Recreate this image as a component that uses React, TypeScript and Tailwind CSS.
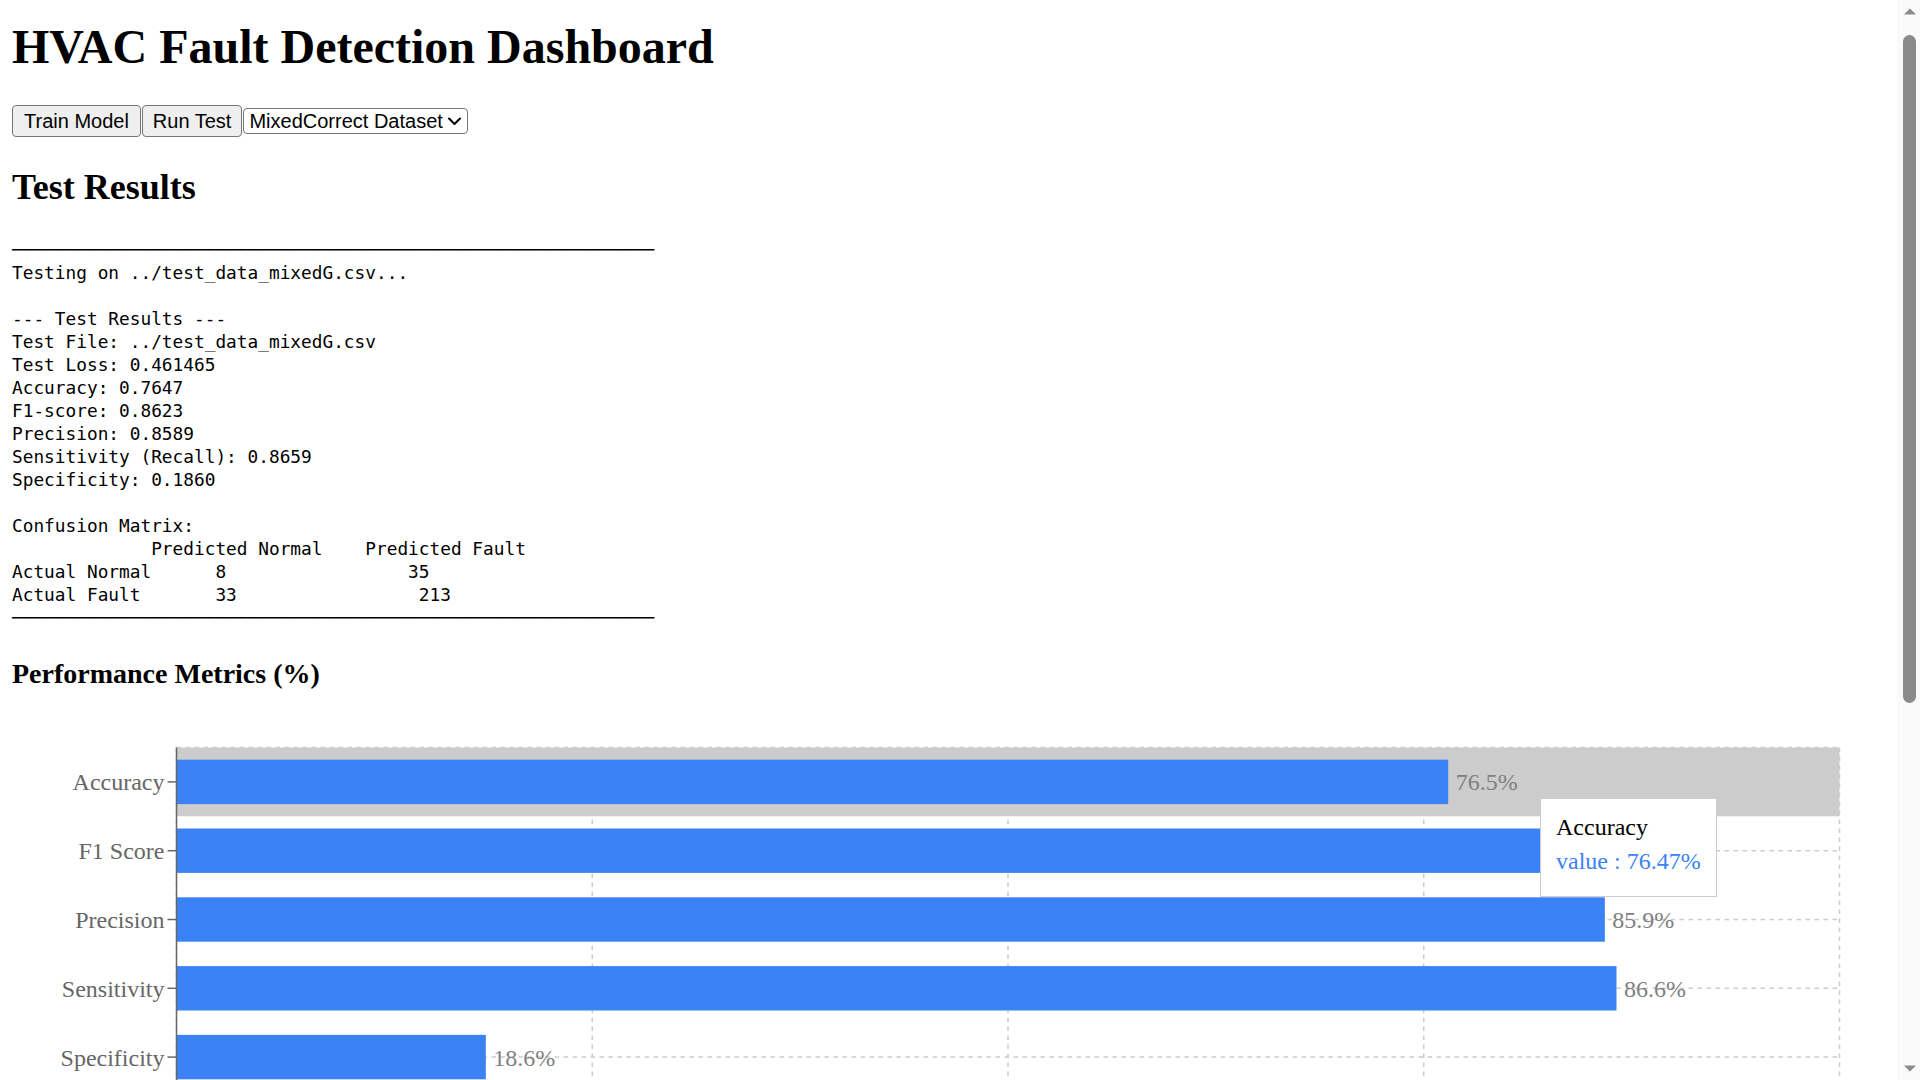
import React from "react";

const metrics = [
  { name: "Accuracy", value: 76.47 },
  { name: "F1 Score", value: 86.23 },
  { name: "Precision", value: 85.89 },
  { name: "Sensitivity", value: 86.59 },
  { name: "Specificity", value: 18.6 },
];

const RULE = "─".repeat(60);

const LOG = `${RULE}
Testing on ../test_data_mixedG.csv...

--- Test Results ---
Test File: ../test_data_mixedG.csv
Test Loss: 0.461465
Accuracy: 0.7647
F1-score: 0.8623
Precision: 0.8589
Sensitivity (Recall): 0.8659
Specificity: 0.1860

Confusion Matrix:
             Predicted Normal    Predicted Fault
Actual Normal      8                 35
Actual Fault       33                 213
${RULE}`;

// chart geometry (svg coords)
const PLOT_X = 164.5;
const PLOT_W = 1663;
const PLOT_Y = 47.5;
const BAND = 68.8;
const BAR_H = 44.4;
const PLOT_H = BAND * metrics.length;

function MetricsChart() {
  const ticks = [0, 25, 50, 75, 100];
  return (
    <div className="relative mt-[10.5px] h-[400px] w-[1873px]">
      <svg width={1873} height={400} className="block" style={{ fontFamily: '"Liberation Serif", serif' }}>
        {/* grid */}
        <g stroke="#ccc" strokeWidth={1.5} strokeDasharray="4.5 4.5" fill="none">
          <line x1={PLOT_X} x2={PLOT_X + PLOT_W} y1={PLOT_Y} y2={PLOT_Y} />
          {metrics.map((m, i) => (
            <line key={m.name} x1={PLOT_X} x2={PLOT_X + PLOT_W} y1={PLOT_Y + BAND * i + BAND / 2} y2={PLOT_Y + BAND * i + BAND / 2} />
          ))}
          {ticks.map((t) => (
            <line key={t} x1={PLOT_X + (PLOT_W * t) / 100} x2={PLOT_X + (PLOT_W * t) / 100} y1={PLOT_Y} y2={PLOT_Y + PLOT_H} />
          ))}
        </g>

        {/* hover cursor */}
        <rect x={PLOT_X} y={PLOT_Y} width={PLOT_W} height={BAND} fill="#ccc" />

        {/* bars */}
        {metrics.map((m, i) => {
          const w = (PLOT_W * m.value) / 100;
          const cy = PLOT_Y + BAND * i + BAND / 2;
          return (
            <g key={m.name}>
              <rect x={PLOT_X} y={PLOT_Y + BAND * i + (BAND - BAR_H) / 2} width={w} height={BAR_H} fill="#3b82f6" />
              <text x={PLOT_X + w + 7.5} y={cy} dy="0.355em" fontSize={24} fill="#808080">
                {m.value.toFixed(1)}%
              </text>
            </g>
          );
        })}

        {/* y axis */}
        <line x1={PLOT_X} x2={PLOT_X} y1={PLOT_Y} y2={PLOT_Y + PLOT_H} stroke="#666" strokeWidth={1.5} />
        {metrics.map((m, i) => {
          const cy = PLOT_Y + BAND * i + BAND / 2;
          return (
            <g key={m.name}>
              <line x1={PLOT_X - 9} x2={PLOT_X} y1={cy} y2={cy} stroke="#666" strokeWidth={1.5} />
              <text x={PLOT_X - 12} y={cy} dy="0.355em" textAnchor="end" fontSize={24} fill="#666">
                {m.name}
              </text>
            </g>
          );
        })}
      </svg>

      {/* tooltip */}
      <div className="absolute left-[1528px] top-[98px] whitespace-nowrap border border-[#ccc] bg-white p-[15px] font-['Liberation_Serif',serif] text-[24px] leading-[27.6px]">
        <p className="text-black">Accuracy</p>
        <p className="py-[6px] text-[#3b82f6]">value : 76.47%</p>
      </div>
    </div>
  );
}

// window scrollbar as it appears in the screenshot
function Scrollbar() {
  return (
    <div className="fixed right-0 top-0 flex h-screen w-[23px] flex-col items-center bg-[#fafafa] pt-[8px]">
      <svg width="14" height="7" viewBox="0 0 14 7" className="ml-[2px]">
        <path d="M1 6.5 L7 0.5 L13 6.5 Z" fill="#8a8a8a" />
      </svg>
      <div className="ml-[2px] mt-[20px] h-[668px] w-[13px] rounded-full bg-[#8a8a8a]" />
      <div className="flex-1" />
      <svg width="14" height="7" viewBox="0 0 14 7" className="mb-[8px] ml-[2px]">
        <path d="M1 0.5 L7 6.5 L13 0.5 Z" fill="#8a8a8a" />
      </svg>
    </div>
  );
}

export default function App() {
  return (
    <div className="min-h-screen bg-white px-[12px] pt-[19px] pb-[40px] text-black font-['Liberation_Serif',serif]">
      <h1 className="text-[48px] leading-[55px] font-bold">HVAC Fault Detection Dashboard</h1>

      <div className="mt-[31px] flex items-center gap-[1px] font-['Liberation_Sans',Arial,sans-serif] text-[20px]">
        <button className="h-[32px] rounded-[4px] border border-[#767676] bg-[#efefef] px-[11px] leading-none text-black">
          Train Model
        </button>
        <button className="h-[32px] rounded-[4px] border border-[#767676] bg-[#efefef] px-[10px] leading-none text-black">
          Run Test
        </button>
        <div className="flex h-[26px] w-[225px] items-center justify-between rounded-[4px] border border-[#767676] bg-white pl-[5px] pr-[5px] leading-none">
          <span>MixedCorrect Dataset</span>
          <svg width="15" height="10" viewBox="0 0 15 10" fill="none">
            <path d="M2 2.5 L7.5 8 L13 2.5" stroke="#000" strokeWidth="2" strokeLinecap="round" strokeLinejoin="round" />
          </svg>
        </div>
      </div>

      <h2 className="mt-[30px] text-[36px] leading-[41px] font-bold">Test Results</h2>

      <pre className="mt-[30px] font-['DejaVu_Sans_Mono',monospace] text-[17.8px] leading-[23px] whitespace-pre">{LOG}</pre>

      <h3 className="mt-[28.5px] text-[28px] leading-[32px] font-bold">Performance Metrics (%)</h3>

      <MetricsChart />

      <Scrollbar />
    </div>
  );
}
